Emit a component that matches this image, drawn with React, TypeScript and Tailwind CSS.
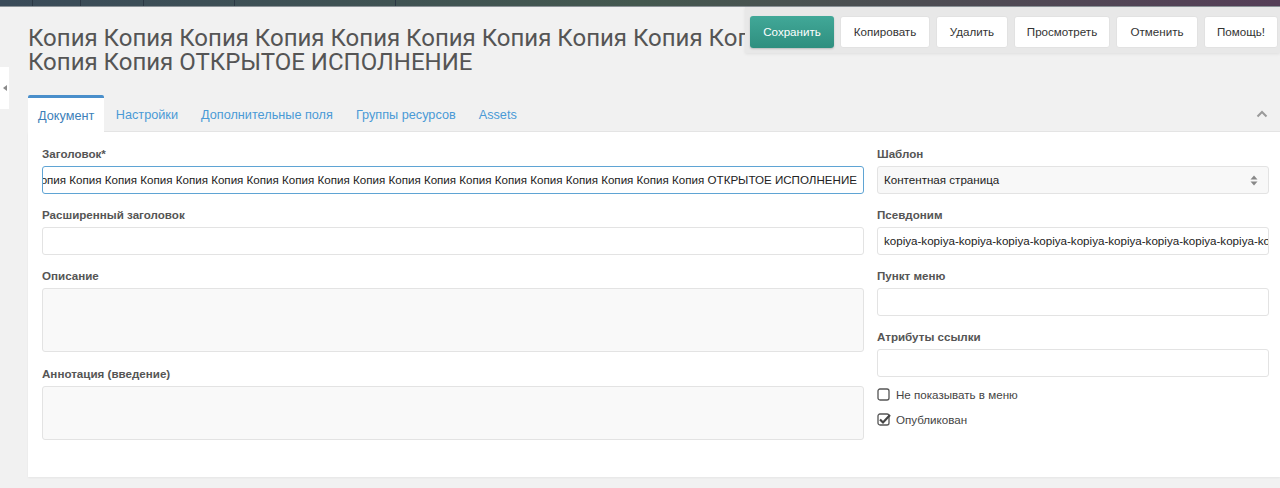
import React from 'react';

const font = { fontFamily: '"Liberation Sans", Arial, sans-serif' };
const titleFont = { fontFamily: 'Roboto, "Liberation Sans", Arial, sans-serif' };

const kopiya = Array.from({ length: 14 }, () => 'kopiya').join('-');
const longTitle = Array.from({ length: 24 }, () => 'Копия').join(' ') + ' ОТКРЫТОЕ ИСПОЛНЕНИЕ';

function Label({ children }: { children: React.ReactNode }) {
  return <div className="text-[11.6px] font-bold text-[#555] leading-[13px] mb-[6px]">{children}</div>;
}

function Field({ children, className = '' }: { children?: React.ReactNode; className?: string }) {
  return (
    <div
      className={`h-[28px] border border-[#e3e3e3] rounded-[3px] flex items-center px-[6px] text-[11.6px] text-[#222] overflow-hidden whitespace-nowrap ${className}`}
    >
      {children}
    </div>
  );
}

function TopStrip() {
  const dividers = [32, 80, 143, 234, 395];
  return (
    <div className="h-[7px] bg-gradient-to-r from-[#3a4b59] via-[#44584f] to-[#553e57] relative border-b border-[#8c9398]">
      {dividers.map((x) => (
        <div key={x} className="absolute top-0 h-full w-px bg-[#2b3844]" style={{ left: x }} />
      ))}
    </div>
  );
}

function Toolbar() {
  const buttons = [
    { t: 'Копировать', w: 'w-[90px]' },
    { t: 'Удалить', w: 'w-[72px]' },
    { t: 'Просмотреть', w: 'w-[96px]' },
    { t: 'Отменить', w: 'w-[82px]' },
    { t: 'Помощь!', w: 'w-[74px]' },
  ];
  return (
    <div className="absolute left-[745px] top-[7px] right-0 h-[46px] bg-[#e8e8e8] shadow-[0_1px_3px_rgba(0,0,0,0.08)] flex items-start gap-[6px] pl-[5px] pt-[9px]">
      <button className="h-[32px] w-[84px] rounded-[3px] bg-gradient-to-b from-[#41a898] to-[#2f8f7f] text-white text-[11.6px] shadow-[0_1px_2px_rgba(0,0,0,0.2)]">
        Сохранить
      </button>
      {buttons.map((b) => (
        <button
          key={b.t}
          className={`h-[32px] ${b.w} rounded-[3px] bg-white border border-[#e2e2e2] text-[#333] text-[11.6px] whitespace-nowrap`}
        >
          {b.t}
        </button>
      ))}
    </div>
  );
}

function Tabs() {
  const tabs = ['Документ', 'Настройки', 'Дополнительные поля', 'Группы ресурсов', 'Assets'];
  return (
    <div className="flex items-end h-[37px] border-b border-[#e4e4e4] relative">
      {tabs.map((t, i) =>
        i === 0 ? (
          <div
            key={t}
            className="h-[37px] -mb-px px-[10px] pt-[3px] flex items-center bg-white border-t-[3px] border-[#4a8fcb] rounded-t-[2px] text-[12.7px] text-[#3d7fb9]"
          >
            {t}
          </div>
        ) : (
          <div key={t} className="h-[36px] px-[11.5px] pt-[5px] flex items-center text-[12.7px] text-[#4a9ad6]">
            {t}
          </div>
        )
      )}
      <div className="ml-auto mr-[12px] self-center pt-[2px]">
        <svg width="12" height="8" viewBox="0 0 12 8">
          <path d="M1.5 6.5 L6 2 L10.5 6.5" stroke="#9a9a9a" strokeWidth="2" fill="none" />
        </svg>
      </div>
    </div>
  );
}

function Checkbox({ checked, label }: { checked?: boolean; label: string }) {
  return (
    <div className="flex items-center gap-[5px] text-[11.6px] text-[#444] h-[14px]">
      <svg width="14" height="14" viewBox="0 0 14 14">
        <rect x="1" y="1" width="11" height="11" rx="2" fill="white" stroke="#555" strokeWidth="1.3" />
        {checked && <path d="M3 6.5 L6 9.5 L13 2" stroke="#444" strokeWidth="2.2" fill="none" />}
      </svg>
      <span>{label}</span>
    </div>
  );
}

export default function App() {
  return (
    <div className="w-[1280px] h-[488px] bg-[#f1f1f1] overflow-hidden relative" style={font}>
      <TopStrip />

      <div className="flex">
        <div className="w-[28px] pt-[60px] shrink-0">
          <div className="w-[9px] h-[42px] bg-white flex items-center justify-center">
            <svg width="4" height="6" viewBox="0 0 4 6">
              <path d="M4 0 L0 3 L4 6 Z" fill="#8a8a8a" />
            </svg>
          </div>
        </div>

        <div className="flex-1 min-w-0">
          <div
            className="pt-[19px] text-[24px] leading-[24px] text-[#555] whitespace-nowrap overflow-hidden h-[88px]"
            style={titleFont}
          >
            <div>Копия Копия Копия Копия Копия Копия Копия Копия Копия Копия</div>
            <div>Копия Копия ОТКРЫТОЕ ИСПОЛНЕНИЕ</div>
          </div>

          <Tabs />

          <div className="bg-white h-[345px] pl-[14px] pr-[11px] pt-[15px] shadow-[0_1px_2px_rgba(0,0,0,0.05)]">
            <div className="grid grid-cols-[822px_392px] gap-x-[13px]">
              <div className="flex flex-col">
                <Label>Заголовок*</Label>
                <div className="h-[28px] border border-[#5fa4d4] rounded-[3px] flex items-center justify-end pr-[6px] text-[11.6px] text-[#222] overflow-hidden whitespace-nowrap">
                  <span>{longTitle}</span>
                </div>

                <div className="mt-[14px]">
                  <Label>Расширенный заголовок</Label>
                  <Field className="bg-white" />
                </div>

                <div className="mt-[14px]">
                  <Label>Описание</Label>
                  <div className="h-[64px] border border-[#e3e3e3] rounded-[3px] bg-[#f9f9f9]" />
                </div>

                <div className="mt-[15px]">
                  <Label>Аннотация (введение)</Label>
                  <div className="h-[54px] border border-[#e3e3e3] rounded-[3px] bg-[#f9f9f9]" />
                </div>
              </div>

              <div className="flex flex-col">
                <Label>Шаблон</Label>
                <Field className="bg-[#f8f8f8] justify-between">
                  <span>Контентная страница</span>
                  <svg width="8" height="11" viewBox="0 0 8 11" className="mr-[4px]">
                    <path d="M4 0.5 L7.5 4.5 L0.5 4.5 Z M4 10.5 L7.5 6.5 L0.5 6.5 Z" fill="#888" />
                  </svg>
                </Field>

                <div className="mt-[14px]">
                  <Label>Псевдоним</Label>
                  <Field className="bg-white">{kopiya}</Field>
                </div>

                <div className="mt-[14px]">
                  <Label>Пункт меню</Label>
                  <Field className="bg-white" />
                </div>

                <div className="mt-[14px]">
                  <Label>Атрибуты ссылки</Label>
                  <Field className="bg-white" />
                </div>

                <div className="mt-[11px] flex flex-col gap-[11px]">
                  <Checkbox label="Не показывать в меню" />
                  <Checkbox checked label="Опубликован" />
                </div>
              </div>
            </div>
          </div>
        </div>
      </div>

      <Toolbar />
    </div>
  );
}
